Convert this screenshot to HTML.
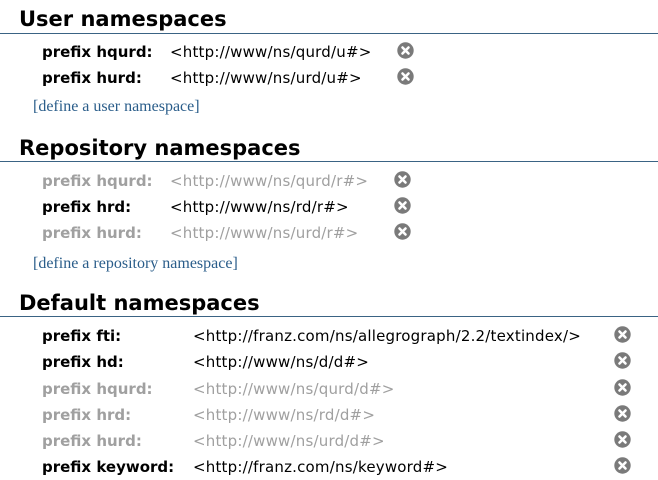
<!DOCTYPE html>
<html><head><style>
body{margin:0;width:658px;height:480px;background:#fff;position:relative;overflow:hidden;font-family:"DejaVu Sans","Liberation Sans",sans-serif;}
.h{position:absolute;left:19px;font-weight:bold;font-size:21px;color:#000;line-height:24px;}
.ln{position:absolute;left:0;width:658px;height:1px;background:#3a6384;}
.r{position:absolute;font-size:15px;line-height:18px;white-space:nowrap;}
.l{left:42px;font-weight:bold;color:#000;}
.v{color:#000;letter-spacing:0.2px;}
.g{color:#a0a0a0 !important;}
.x{position:absolute;width:17px;height:17px;}
.a{position:absolute;left:33px;font-family:"Liberation Serif",serif;font-size:16px;color:#2a5d8a;line-height:18px;}
</style></head><body>
<svg width="0" height="0" style="position:absolute"><defs><g id="ic"><circle cx="8.5" cy="8.5" r="8.2" fill="#7a7a7a"/><path d="M5.5 5.5L11.5 11.5M11.5 5.5L5.5 11.5" stroke="#fff" stroke-width="2.6" stroke-linecap="round"/></g></defs></svg>

<div class="h" style="top:7px">User namespaces</div>
<div class="ln" style="top:33px"></div>
<div class="r l" style="top:43px">prefix hqurd:</div><div class="r v" style="left:170px;top:43px">&lt;http://www/ns/qurd/u#&gt;</div>
<svg class="x" style="left:397px;top:42px"><use href="#ic"/></svg>
<div class="r l" style="top:69px">prefix hurd:</div><div class="r v" style="left:170px;top:69px">&lt;http://www/ns/urd/u#&gt;</div>
<svg class="x" style="left:397px;top:68px"><use href="#ic"/></svg>
<div class="a" style="top:98px">[define a user namespace]</div>

<div class="h" style="top:136px">Repository namespaces</div>
<div class="ln" style="top:161px"></div>
<div class="r l g" style="top:172px">prefix hqurd:</div><div class="r v g" style="left:170px;top:172px">&lt;http://www/ns/qurd/r#&gt;</div>
<svg class="x" style="left:394px;top:171px"><use href="#ic"/></svg>
<div class="r l" style="top:198px">prefix hrd:</div><div class="r v" style="left:170px;top:198px">&lt;http://www/ns/rd/r#&gt;</div>
<svg class="x" style="left:394px;top:197px"><use href="#ic"/></svg>
<div class="r l g" style="top:224px">prefix hurd:</div><div class="r v g" style="left:170px;top:224px">&lt;http://www/ns/urd/r#&gt;</div>
<svg class="x" style="left:394px;top:223px"><use href="#ic"/></svg>
<div class="a" style="top:255px">[define a repository namespace]</div>

<div class="h" style="top:291px">Default namespaces</div>
<div class="ln" style="top:316px"></div>
<div class="r l" style="top:327px">prefix fti:</div><div class="r v" style="left:193px;top:327px">&lt;http://franz.com/ns/allegrograph/2.2/textindex/&gt;</div>
<svg class="x" style="left:614px;top:326px"><use href="#ic"/></svg>
<div class="r l" style="top:353px">prefix hd:</div><div class="r v" style="left:193px;top:353px">&lt;http://www/ns/d/d#&gt;</div>
<svg class="x" style="left:614px;top:352px"><use href="#ic"/></svg>
<div class="r l g" style="top:380px">prefix hqurd:</div><div class="r v g" style="left:193px;top:380px">&lt;http://www/ns/qurd/d#&gt;</div>
<svg class="x" style="left:614px;top:379px"><use href="#ic"/></svg>
<div class="r l g" style="top:406px">prefix hrd:</div><div class="r v g" style="left:193px;top:406px">&lt;http://www/ns/rd/d#&gt;</div>
<svg class="x" style="left:614px;top:405px"><use href="#ic"/></svg>
<div class="r l g" style="top:432px">prefix hurd:</div><div class="r v g" style="left:193px;top:432px">&lt;http://www/ns/urd/d#&gt;</div>
<svg class="x" style="left:614px;top:431px"><use href="#ic"/></svg>
<div class="r l" style="top:458px">prefix keyword:</div><div class="r v" style="left:193px;top:458px">&lt;http://franz.com/ns/keyword#&gt;</div>
<svg class="x" style="left:614px;top:457px"><use href="#ic"/></svg>
</body></html>
